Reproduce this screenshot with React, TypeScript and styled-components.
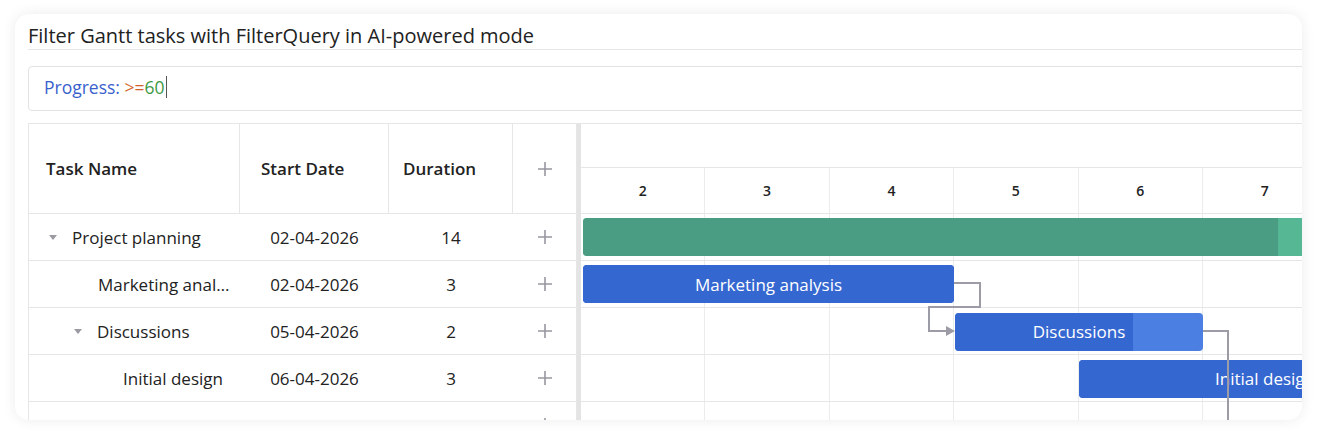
import React from "react";
import styled, { createGlobalStyle } from "styled-components";

const GlobalStyle = createGlobalStyle`
  body {
    margin: 0;
    background-color: #ffffff;
    font-family: "Open Sans", "Noto Sans", sans-serif;
    color: #212121;
  }
`;

const DAY = 124.4;
const ROW = 47;

const Page = styled.div`
  padding: 14px 18px 20px 15px;
  box-sizing: border-box;
  width: 1320px;
  height: 440px;
`;
const Card = styled.div`
  height: 406px;
  border-radius: 14px;
  background-color: #ffffff;
  box-shadow: 0 0 14px rgba(0, 0, 0, 0.08);
  overflow: hidden;
  padding: 10px 0 0 13px;
  box-sizing: border-box;
`;
const Title = styled.div`
  font-size: 20px;
  line-height: 24px;
  color: #222222;
  padding-bottom: 1px;
  border-bottom: 1px solid #e6e6e6;
`;
const QueryBox = styled.div`
  margin-top: 16px;
  width: 1400px;
  height: 45px;
  border: 1px solid #e2e2e2;
  border-radius: 4px;
  box-sizing: border-box;
  padding: 0 15px 3px;
  display: flex;
  align-items: center;
  font-size: 17.5px;
`;
const Token = styled.span<{ $tone: "field" | "op" | "value" }>`
  color: ${(p) =>
    p.$tone === "field" ? "#3a5fcd" : p.$tone === "op" ? "#d5622c" : "#3f9a45"};
  white-space: pre;
`;
const Caret = styled.span`
  display: inline-block;
  width: 1.5px;
  height: 22px;
  margin-left: 1px;
  background-color: #555555;
`;
const Gantt = styled.div`
  margin-top: 12px;
  width: 1500px;
  height: 300px;
  display: flex;
  border-top: 1px solid #e6e6e6;
  border-left: 1px solid #e6e6e6;
`;
const Grid = styled.div`
  display: grid;
  grid-template-columns: 211px 149px 124px 64px;
  grid-auto-rows: ${ROW}px;
  grid-template-rows: 90px;
  align-content: start;
`;
const HeaderCell = styled.div<{ $pad?: number; $center?: boolean }>`
  display: flex;
  align-items: center;
  justify-content: ${(p) => (p.$center ? "center" : "flex-start")};
  padding-left: ${(p) => p.$pad ?? 0}px;
  font-size: 17px;
  font-weight: 600;
  color: #222222;
  border-right: 1px solid #e6e6e6;
  border-bottom: 1px solid #e6e6e6;
`;
const Cell = styled.div<{ $indent?: number; $center?: boolean }>`
  display: flex;
  align-items: center;
  justify-content: ${(p) => (p.$center ? "center" : "flex-start")};
  padding-left: ${(p) => p.$indent ?? 0}px;
  font-size: 17px;
  color: #222222;
  border-bottom: 1px solid #e6e6e6;
  white-space: nowrap;
  overflow: hidden;
  &:nth-child(4n) {
    border-right: 1px solid #e6e6e6;
  }
`;
const Arrow = styled.span`
  width: 0;
  height: 0;
  border-left: 4.5px solid transparent;
  border-right: 4.5px solid transparent;
  border-top: 5px solid #9a9aa2;
  margin-right: 15px;
`;
const Splitter = styled.div`
  width: 4px;
  background-color: #e4e4e4;
  flex-shrink: 0;
`;
const Chart = styled.div`
  flex: 1;
  display: flex;
  flex-direction: column;
`;
const TopTier = styled.div`
  height: 44px;
  flex-shrink: 0;
  border-bottom: 1px solid #e6e6e6;
  box-sizing: border-box;
`;
const DayRow = styled.div<{ $height: number }>`
  display: flex;
  flex-shrink: 0;
  height: ${(p) => p.$height}px;
  border-bottom: 1px solid #e6e6e6;
  box-sizing: border-box;
`;
const Day = styled.div`
  width: ${DAY}px;
  flex-shrink: 0;
  border-right: 1px solid #ececec;
  box-sizing: border-box;
  display: flex;
  align-items: center;
  justify-content: center;
  font-size: 14px;
  font-weight: 600;
  color: #222222;
`;
const Body = styled.div`
  position: relative;
  flex-shrink: 0;
`;
const Bar = styled.div<{ $rest: string }>`
  position: absolute;
  height: 38px;
  border-radius: 4px;
  overflow: hidden;
  display: flex;
  align-items: center;
  justify-content: center;
  color: #ffffff;
  font-size: 17px;
  white-space: nowrap;
  background-color: ${(p) => p.$rest};
`;
const Progress = styled.div<{ $color: string }>`
  position: absolute;
  left: 0;
  top: 0;
  bottom: 0;
  background-color: ${(p) => p.$color};
`;
const BarLabel = styled.span`
  position: relative;
`;
const Links = styled.svg`
  position: absolute;
  left: 0;
  top: 0;
  overflow: visible;
`;

type Task = {
  name: string;
  start: string;
  duration: number;
  level: number;
  parent?: boolean;
};

const tasks: Task[] = [
  { name: "Project planning", start: "02-04-2026", duration: 14, level: 0, parent: true },
  { name: "Marketing anal…", start: "02-04-2026", duration: 3, level: 1 },
  { name: "Discussions", start: "05-04-2026", duration: 2, level: 1, parent: true },
  { name: "Initial design", start: "06-04-2026", duration: 3, level: 2 },
  { name: "Final review", start: "09-04-2026", duration: 2, level: 2 },
];

const bars = [
  { label: "", left: 2, width: 14 * DAY - 4, done: 695, color: "#4a9c82", rest: "#56b794" },
  { label: "Marketing analysis", left: 2, width: 371, done: 371, color: "#3567d1", rest: "#3567d1" },
  { label: "Discussions", left: 374, width: 248, done: 178, color: "#3567d1", rest: "#4b80e2" },
  { label: "Initial design", left: 498, width: 372, done: 372, color: "#3567d1", rest: "#3567d1" },
];

const PlusIcon = () => (
  <svg width="16" height="16" viewBox="0 0 16 16">
    <path d="M8 1v14M1 8h14" stroke="#9797a0" strokeWidth="1.6" fill="none" />
  </svg>
);

const days = [2, 3, 4, 5, 6, 7, 8, 9];

const App = () => {
  return (
    <Page>
      <GlobalStyle />
      <Card>
        <Title>Filter Gantt tasks with FilterQuery in AI-powered mode</Title>
        <QueryBox>
          <Token $tone="field">Progress: </Token>
          <Token $tone="op">&gt;=</Token>
          <Token $tone="value">60</Token>
          <Caret />
        </QueryBox>
        <Gantt>
          <Grid>
            <HeaderCell $pad={17}>Task Name</HeaderCell>
            <HeaderCell $pad={21}>Start Date</HeaderCell>
            <HeaderCell $pad={14}>Duration</HeaderCell>
            <HeaderCell $center>
              <PlusIcon />
            </HeaderCell>
            {tasks.map((t) => (
              <React.Fragment key={t.name}>
                <Cell $indent={20 + t.level * 25 + (t.parent ? 0 : 24)}>
                  {t.parent && <Arrow />}
                  {t.name}
                </Cell>
                <Cell $center>{t.start}</Cell>
                <Cell $center>{t.duration}</Cell>
                <Cell $center>
                  <PlusIcon />
                </Cell>
              </React.Fragment>
            ))}
          </Grid>
          <Splitter />
          <Chart>
            <TopTier />
            <DayRow $height={46}>
              {days.map((d) => (
                <Day key={d}>{d}</Day>
              ))}
            </DayRow>
            <Body>
              {tasks.map((t) => (
                <DayRow key={t.name} $height={ROW}>
                  {days.map((d) => (
                    <Day key={d} />
                  ))}
                </DayRow>
              ))}
              {bars.map((b, i) => (
                <Bar
                  key={i}
                  $rest={b.rest}
                  style={{ left: b.left, top: 4 + i * 47.3, width: b.width }}
                >
                  <Progress $color={b.color} style={{ width: b.done }} />
                  <BarLabel>{b.label}</BarLabel>
                </Bar>
              ))}
              <Links width="900" height="240">
                <path
                  d="M373 69 H399 V93 H348 V117 H366"
                  stroke="#9c9ca6"
                  strokeWidth="2"
                  fill="none"
                />
                <polygon points="365,112 374,117 365,122" fill="#9c9ca6" />
                <path d="M622 117 H647 V240" stroke="#9c9ca6" strokeWidth="2" fill="none" />
              </Links>
            </Body>
          </Chart>
        </Gantt>
      </Card>
    </Page>
  );
};

export default App;
